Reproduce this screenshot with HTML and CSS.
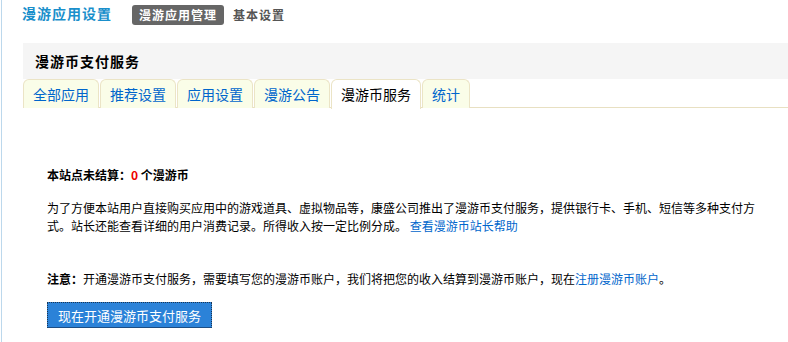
FILE: index.html
```html
<!DOCTYPE html>
<html>
<head>
  <meta charset="utf-8">
  <title>漫游币支付服务</title>
  <link rel="stylesheet" href="styles.css">
</head>
<body>
<div class="page">
  <div class="topbar">
    <h1 class="site-title">漫游应用设置</h1>
    <a class="topnav current" href="#">漫游应用管理</a>
    <a class="topnav" href="#">基本设置</a>
  </div>

  <div class="panel">
    <h2 class="panel-title">漫游币支付服务</h2>
  </div>

  <ul class="tabs">
    <li><a href="#">全部应用</a></li>
    <li><a href="#">推荐设置</a></li>
    <li><a href="#">应用设置</a></li>
    <li><a href="#">漫游公告</a></li>
    <li class="active"><a href="#">漫游币服务</a></li>
    <li><a href="#">统计</a></li>
  </ul>

  <div class="content">
    <p class="balance">本站点未结算：<span class="zero">0</span> 个漫游币</p>
    <p class="intro">为了方便本站用户直接购买应用中的游戏道具、虚拟物品等，康盛公司推出了漫游币支付服务，提供银行卡、手机、短信等多种支付方式。站长还能查看详细的用户消费记录。所得收入按一定比例分成。 <a href="#">查看漫游币站长帮助</a></p>
    <p class="notice"><b>注意：</b>开通漫游币支付服务，需要填写您的漫游币账户，我们将把您的收入结算到漫游币账户，现在<a href="#">注册漫游币账户</a>。</p>
    <button class="open-btn">现在开通漫游币支付服务</button>
  </div>
</div>
</body>
</html>
```

FILE: styles.css
```css
body{
  margin: 0;
  background: #fff;
  font-family: "Noto Sans CJK SC", "Liberation Sans", sans-serif;
  font-size: 12px;
  color: #000;
}

.page{
  margin-left: 1px;
  border-left: 1px solid #bcd8ec;
  min-height: 342px;
}

a{
  color: #0066cc;
  text-decoration: none;
}

/* top bar */
.topbar{
  height: 43px;
  padding-left: 20px;
  display: flex;
  align-items: flex-start;
}

.site-title{
  margin: 4px 20px 0 0;
  font-size: 14px;
  line-height: 18px;
  letter-spacing: 1px;
  color: #1a8fcb;
}

.topnav{
  margin-top: 5px;
  height: 20px;
  line-height: 20px;
  padding: 0 7px;
  font-weight: bold;
  letter-spacing: 1px;
  color: #555;
}

.topnav.current{
  background: #666;
  color: #fff;
  border-radius: 3px;
  margin-right: 2px;
}

/* panel */
.panel{
  margin-left: 21px;
  height: 36px;
  background: #f5f5f5;
  padding-left: 12px;
  display: flex;
  align-items: center;
}

.panel-title{
  margin: 0;
  font-size: 14px;
  letter-spacing: 1px;
  line-height: 18px;
}

/* tabs */
.tabs{
  margin: 0 0 0 21px;
  padding: 0;
  list-style: none;
  display: flex;
  gap: 1px;
  height: 28px;
  border-bottom: 1px solid #e8e0c2;
}

.tabs li a{
  display: block;
  height: 28px;
  line-height: 28px;
  padding: 0 9px;
  font-size: 14px;
  background: #fafde8;
  border: 1px solid #ebe4c6;
  border-bottom: none;
  border-radius: 6px 6px 0 0;
  color: #0066cc;
}

.tabs li.active a{
  background: #fff;
  color: #000;
  height: 29px;
}

/* content */
.content{
  padding: 58px 0 0 45px;
}

.content p{
  margin: 0;
  line-height: 18px;
}

.balance{
  font-weight: bold;
}

.zero{
  color: #e00;
}

.intro{
  width: 712px;
  margin-top: 15px !important;
}

.notice{
  margin-top: 35px !important;
}

.open-btn{
  display: block;
  margin-top: 14px;
  height: 26px;
  padding: 0 10px;
  background: #2b82d8;
  color: #fff;
  font-family: inherit;
  font-size: 13px;
  border: 1px dotted #1a3552;
  border-bottom: 1px solid #1d4e84;
}
```
